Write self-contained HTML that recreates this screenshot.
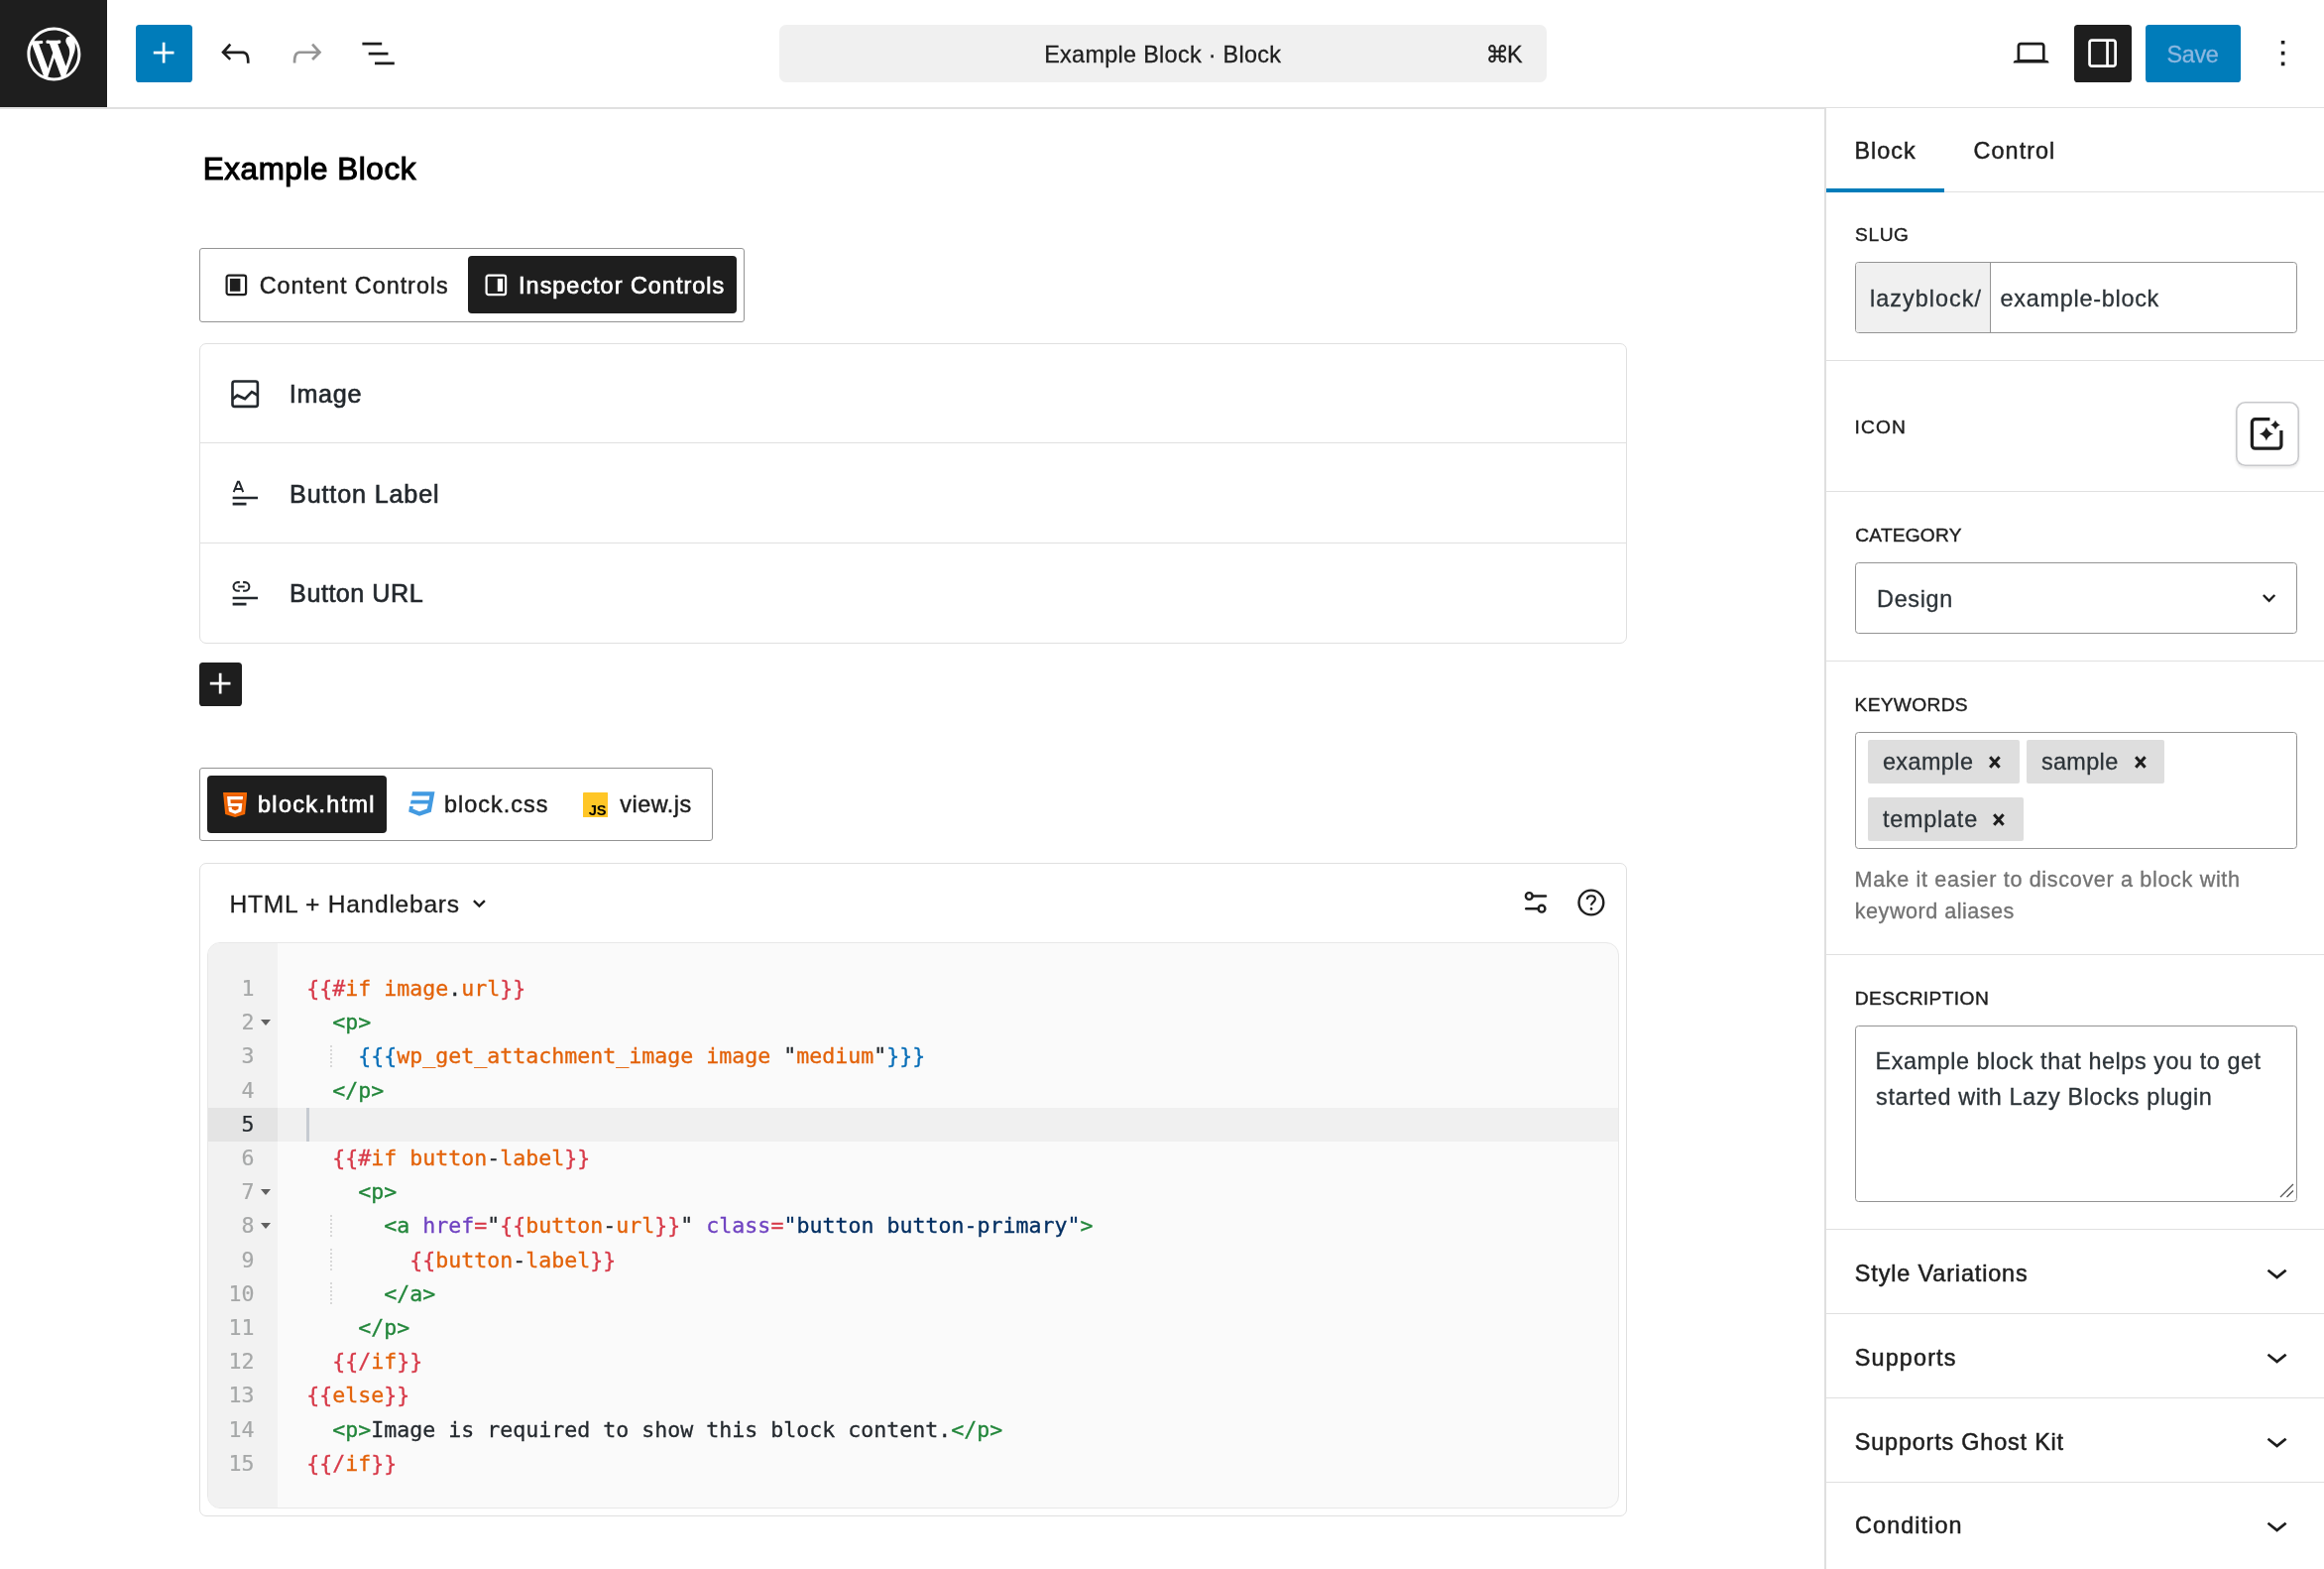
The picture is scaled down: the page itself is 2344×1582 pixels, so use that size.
<!DOCTYPE html>
<html lang="en">
<head>
<meta charset="utf-8">
<title>Example Block · Block</title>
<style>
*{box-sizing:border-box;margin:0;padding:0}
html,body{width:2344px;height:1582px;overflow:hidden;background:#fff}
body{position:relative;will-change:transform;font-family:"Liberation Sans",sans-serif;color:#1e1e1e}
.a{position:absolute}
.t{position:absolute;white-space:pre;line-height:1}
svg{position:absolute;display:block}
.ic{width:43.2px;height:43.2px;fill:#1e1e1e}
.hl{position:absolute;left:1842px;right:0;height:1px;background:#e0e0e0}
.ln{position:absolute;left:210px;width:46.4px;text-align:right;font:21.6px/34.2px "DejaVu Sans Mono","Liberation Mono",monospace;color:#a6a8a8;-webkit-text-stroke:.2px}
.ln.act{color:#24292e}
.cl{position:absolute;left:309.2px;white-space:pre;font:21.6px/34.2px "DejaVu Sans Mono","Liberation Mono",monospace;color:#24292e;-webkit-text-stroke:.3px}
.fold{position:absolute;left:263.4px;width:0;height:0;border-left:5.1px solid transparent;border-right:5.1px solid transparent;border-top:6.2px solid #606060}
.guide{position:absolute;left:333px;width:2px;height:23px;margin-top:5px;background:repeating-linear-gradient(to bottom,#d8d8d8 0 2px,transparent 2px 4px)}
.tok{position:absolute;height:43.4px;background:#dedede;border-radius:2px}
.x{position:absolute;width:11.8px;height:12.900px;overflow:visible}
</style>
</head>
<body>
<!-- ================= HEADER ================= -->
<div class="a" style="left:0;top:0;width:2344px;height:108px;background:#fff"></div>
<div class="a" style="left:0;top:108px;width:1842px;height:2px;background:#e0e0e0"></div>
<div class="a" style="left:1842px;top:108px;width:502px;height:1px;background:#e0e0e0"></div>
<div class="a" style="left:0;top:0;width:108px;height:108px;background:#1e1e1e"></div>
<svg style="left:21.6px;top:21.6px;width:64.8px;height:64.8px;fill:#fff" viewBox="-2 -2 24 24"><path d="M20 10c0-5.51-4.49-10-10-10C4.48 0 0 4.49 0 10c0 5.52 4.48 10 10 10 5.51 0 10-4.48 10-10zM7.780 15.370L4.370 6.220c.55-.02 1.170-.08 1.170-.08.5-.06.44-1.130-.06-1.110 0 0-1.450.11-2.370.11-.18 0-.37 0-.58-.01C4.120 2.690 6.870 1.110 10 1.110c2.330 0 4.450.87 6.050 2.340-.68-.11-1.650.39-1.650 1.580 0 .74.45 1.360.9 2.100.35.61.55 1.360.55 2.460 0 1.490-1.400 5-1.400 5l-3.030-8.370c.54-.02.82-.17.82-.17.5-.05.44-1.250-.06-1.220 0 0-1.440.12-2.380.12-.87 0-2.330-.12-2.330-.12-.5-.03-.56 1.200-.06 1.220l.92.08 1.260 3.410zM17.410 10c.24-.64.74-1.870.43-4.250.7 1.290 1.050 2.710 1.050 4.250 0 3.290-1.730 6.240-4.400 7.780.97-2.590 1.940-5.200 2.920-7.780zM6.100 18.090C3.120 16.650 1.110 13.530 1.110 10c0-1.300.23-2.480.72-3.590C3.250 10.300 4.670 14.200 6.100 18.090zm4.030-6.630l2.580 6.980c-.86.29-1.760.45-2.710.45-.79 0-1.570-.11-2.290-.33.81-2.380 1.620-4.740 2.420-7.100z"/></svg>
<div class="a" style="left:137px;top:25px;width:57px;height:58px;background:#007cba;border-radius:3.6px"></div>
<svg class="ic" style="left:144.2px;top:32.2px;fill:#fff" viewBox="0 0 24 24"><path d="M11 12.500V17.500H12.500V12.500H17.500V11H12.500V6H11V11H6V12.500H11Z"/></svg>
<svg class="ic" style="left:216.3px;top:32.4px" viewBox="0 0 24 24"><path d="M18.300 11.700c-.6-.6-1.400-.9-2.300-.9H6.700l2.900-3.300-1.100-1-4.500 5L8.500 16l1-1-2.700-2.700H16c.5 0 .9.2 1.300.5 1 1 1 3.400 1 4.500v.3h1.500v-.2c0-1.500 0-4.300-1.500-5.700z"/></svg>
<svg class="ic" style="left:288px;top:32.4px;fill:#959595" viewBox="0 0 24 24"><path d="M15.600 6.500l-1.100 1 2.900 3.300H8c-.9 0-1.700.3-2.300.9-1.400 1.500-1.400 4.200-1.400 5.600v.2h1.500v-.3c0-1.100 0-3.500 1-4.500.3-.3.7-.5 1.300-.5h9.200L14.500 15l1.100 1.100 4.600-4.600-4.600-5z"/></svg>
<svg class="ic" style="left:359.800px;top:32.4px" viewBox="0 0 24 24"><path d="M3 6h11v1.500H3V6Zm3.500 5.500h11V13h-11v-1.500ZM21 17H10v1.500h11V17Z"/></svg>
<div class="a" style="left:786px;top:25px;width:774px;height:58px;background:#f0f0f0;border-radius:7px"></div>
<svg class="ic" style="left:2027.4px;top:32.4px" viewBox="0 0 24 24"><path d="M20.500 16h-.7V8c0-1.100-.9-2-2-2H6.200c-1.100 0-2 .9-2 2v8h-.7c-.8 0-1.500.7-1.500 1.500h20c0-.8-.7-1.500-1.500-1.500zM5.700 8c0-.3.200-.5.500-.5h11.600c.3 0 .5.200.5.500v7.600H5.700V8z"/></svg>
<div class="a" style="left:2092px;top:25px;width:58px;height:58px;background:#1e1e1e;border-radius:3.6px"></div>
<svg class="ic" style="left:2099.2px;top:32.2px;fill:#fff" viewBox="0 0 24 24"><path fill-rule="evenodd" clip-rule="evenodd" d="M18 4H6c-1.100 0-2 .9-2 2v12c0 1.100.9 2 2 2h12c1.100 0 2-.9 2-2V6c0-1.100-.9-2-2-2zm-4 14.500H6c-.3 0-.5-.2-.5-.5V6c0-.3.2-.5.5-.5h8v13zm4.500-.5c0 .3-.2.5-.5.5h-2.500v-13H18c.3 0 .5.2.5.5v12z"/></svg>
<div class="a" style="left:2164px;top:25px;width:96px;height:58px;background:#007cba;border-radius:3.6px"></div>
<svg class="ic" style="left:2280.800px;top:32.4px" viewBox="0 0 24 24"><path d="M13 19h-2v-2h2v2zm0-6h-2v-2h2v2zm0-6h-2V5h2v2z"/></svg>

<!-- ================= MAIN ================= -->
<div class="a" style="left:201px;top:250px;width:550px;height:75px;border:1px solid #949494;border-radius:3px"></div>
<div class="a" style="left:472px;top:258px;width:271px;height:58px;background:#1e1e1e;border-radius:4px"></div>
<svg style="left:226px;top:274.8px;width:25px;height:25px" viewBox="0 0 25 25"><rect x="2.600" y="2.600" width="19.5" height="19.5" rx="2.200" fill="none" stroke="#1e1e1e" stroke-width="2.200"/><rect x="5.900" y="5.900" width="10.5" height="12.900" fill="#1e1e1e"/></svg>
<svg style="left:487.900px;top:274.8px;width:25px;height:25px" viewBox="0 0 25 25"><rect x="2.600" y="2.600" width="19.5" height="19.5" rx="2.200" fill="none" stroke="#fff" stroke-width="2.200"/><rect x="13.800" y="5.900" width="5.300" height="12.900" fill="#fff"/></svg>

<div class="a" style="left:201px;top:346px;width:1440px;height:303px;border:1px solid #e0e0e0;border-radius:7px"></div>
<div class="a" style="left:202px;top:446px;width:1438px;height:1px;background:#e0e0e0"></div>
<div class="a" style="left:202px;top:547px;width:1438px;height:1px;background:#e0e0e0"></div>
<!-- image control icon -->
<svg class="ic" style="left:225.600px;top:375.600px" viewBox="0 0 24 24" fill="none"><rect x="4.720" y="4.720" width="14.1" height="14.1" rx="1.200" fill="none" stroke="#23282d" stroke-width="1.450"/><path d="M4.800 14.700L7.400 12.600 11.700 14.500 15.500 10.600 19.100 12.700" fill="none" stroke="#23282d" stroke-width="1.500"/></svg>
<!-- text control icon -->
<svg class="ic" style="left:225.600px;top:475.150px" viewBox="0 0 24 24"><path d="M4.800 14.250h14.100v1.500H4.800zM4.800 17.700h7.700v1.500H4.800z" fill="#23282d"/><path d="M5.400 11.800L7.700 6h.7l2.300 5.800M6.200 10h3.700" fill="none" stroke="#23282d" stroke-width="1.100"/></svg>
<!-- url control icon -->
<svg class="ic" style="left:225.600px;top:576.150px" viewBox="0 0 24 24"><path d="M4.800 14.250h14.100v1.500H4.800zM4.800 17.700h7.700v1.500H4.800z" fill="#23282d"/><path d="M8.800 11H7.700a2.400 2.400 0 0 1 0-4.800h1.100M10.600 6.200h1.100a2.400 2.400 0 0 1 0 4.800h-1.100M7.900 8.600h3.600" fill="none" stroke="#23282d" stroke-width="1.150"/></svg>
<div class="a" style="left:201px;top:668px;width:43px;height:44px;background:#1e1e1e;border-radius:3.6px"></div>
<svg class="ic" style="left:201px;top:668px;fill:#fff" viewBox="0 0 24 24"><path d="M11 12.500V17.500H12.500V12.500H17.500V11H12.500V6H11V11H6V12.500H11Z"/></svg>

<div class="a" style="left:201px;top:774px;width:518px;height:74px;border:1px solid #949494;border-radius:3px"></div>
<div class="a" style="left:209px;top:782px;width:181px;height:58px;background:#1e1e1e;border-radius:4px"></div>
<!-- html5 icon -->
<svg style="left:224.800px;top:799.100px;width:24.300px;height:25px" viewBox="0 0 24.300 25"><path d="M0 0h24.300l-2.200 21.900-9.950 3.100-9.950-3.100z" fill="#f56a05"/><path d="M2.600 2.400h19.100l-1.700 17.800-7.850 2.400-7.850-2.400z" fill="#e65c00"/><path d="M4.100 4h15.950l-.3 3.300H7.400l.3 3.700h11.600l-.9 8.200-6.250 2.500-6.250-2.500-.5-4.500h3.300l.25 2.300 3.200 1.300 3.200-1.300.35-2.900H4.900z" fill="#fff"/></svg>
<!-- css3 icon -->
<svg style="left:411.900px;top:798.100px;width:26.800px;height:25px" viewBox="0 0 26.800 25"><path d="M4 .15H26.500L22.800 20.700 11 24.800.2 20.500 1 15.100H4.800L4.400 17.500 11 20.200 18.600 17.600 19.900 12.600H1.900L2.600 8.650H20.700L21.300 4.500H3.200Z" fill="#429ae1"/></svg>
<!-- js icon -->
<svg style="left:587.800px;top:798.700px;width:25.200px;height:25.200px" viewBox="0 0 25.200 25.200"><rect width="25.200" height="25.200" rx="1" fill="#ffc627"/><text x="5.700" y="23" font-family="Liberation Sans, sans-serif" font-weight="700" font-size="14.700" fill="#000">JS</text></svg>

<div class="a" style="left:201px;top:870px;width:1440px;height:659px;border:1px solid #e0e0e0;border-radius:7px"></div>
<svg style="left:475px;top:904px;width:18px;height:14px" viewBox="0 0 18 14"><path d="M2.900 4.100L8.400 9.600 13.900 4.100" fill="none" stroke="#1e1e1e" stroke-width="2.400"/></svg>
<!-- settings + help icons -->
<svg style="left:1535px;top:896px;width:28px;height:28px" viewBox="0 0 28 28" fill="none" stroke="#1e1e1e" stroke-width="2.400" stroke-linecap="round"><circle cx="7.300" cy="7.500" r="3.400"/><path d="M10.800 7.500H24"/><circle cx="20" cy="20.200" r="3.400"/><path d="M4.200 20.200H16.500"/></svg>
<svg style="left:1590px;top:895px;width:30px;height:30px" viewBox="0 0 30 30" fill="none" stroke="#1e1e1e" stroke-width="2.400"><circle cx="14.900" cy="15" r="12.400"/><path d="M10.700 11.800c.2-2.300 2-3.600 4.200-3.600 2.300 0 4 1.400 4 3.400 0 2.900-3.800 3.200-3.900 6.200" stroke-width="2.100"/><circle cx="15" cy="21.400" r="1.300" fill="#1e1e1e" stroke="none"/></svg>
<!-- code area -->
<div class="a" style="left:209px;top:950px;width:1424px;height:571px;background:#fafafa;border:1px solid #e8e8e8;border-radius:13px;overflow:hidden">
  <div class="a" style="left:-1px;top:-1px;width:71px;height:571px;background:#f2f2f2"></div>
  <div class="a" style="left:-1px;top:166px;width:71px;height:34px;background:#e4e4e4"></div>
  <div class="a" style="left:70px;top:166px;width:1360px;height:34px;background:#f0f0f0"></div>
</div>
<div class="a" style="left:309px;top:1117px;width:3px;height:34px;background:#c6cbd1"></div>
<div class="ln" style="top:980px">1</div>
<div class="cl" style="top:980px"><span style="color:#d73a49">{{#</span><span style="color:#e36209">if image</span><span style="color:#24292e">.</span><span style="color:#e36209">url</span><span style="color:#d73a49">}}</span></div>
<div class="ln" style="top:1014px">2</div>
<div class="cl" style="top:1014px">  <span style="color:#22863a">&lt;p&gt;</span></div>
<div class="fold" style="top:1028.0px"></div>
<div class="ln" style="top:1048px">3</div>
<div class="cl" style="top:1048px">    <span style="color:#0a6fb8">{{{</span><span style="color:#e36209">wp_get_attachment_image image </span><span style="color:#24292e">&quot;</span><span style="color:#e36209">medium</span><span style="color:#24292e">&quot;</span><span style="color:#0a6fb8">}}}</span></div>
<div class="guide" style="top:1048.6px"></div>
<div class="ln" style="top:1083px">4</div>
<div class="cl" style="top:1083px">  <span style="color:#22863a">&lt;/p&gt;</span></div>
<div class="ln act" style="top:1117px">5</div>
<div class="cl" style="top:1117px"></div>
<div class="ln" style="top:1151px">6</div>
<div class="cl" style="top:1151px">  <span style="color:#d73a49">{{#</span><span style="color:#e36209">if button</span><span style="color:#24292e">-</span><span style="color:#e36209">label</span><span style="color:#d73a49">}}</span></div>
<div class="ln" style="top:1185px">7</div>
<div class="cl" style="top:1185px">    <span style="color:#22863a">&lt;p&gt;</span></div>
<div class="fold" style="top:1199.0px"></div>
<div class="ln" style="top:1219px">8</div>
<div class="cl" style="top:1219px">      <span style="color:#22863a">&lt;a </span><span style="color:#6f42c1">href</span><span style="color:#d73a49">=</span><span style="color:#24292e">&quot;</span><span style="color:#d73a49">{{</span><span style="color:#e36209">button</span><span style="color:#24292e">-</span><span style="color:#e36209">url</span><span style="color:#d73a49">}}</span><span style="color:#24292e">&quot; </span><span style="color:#6f42c1">class</span><span style="color:#d73a49">=</span><span style="color:#032f62">&quot;button button-primary&quot;</span><span style="color:#22863a">&gt;</span></div>
<div class="fold" style="top:1233.2px"></div>
<div class="guide" style="top:1219.6px"></div>
<div class="ln" style="top:1254px">9</div>
<div class="cl" style="top:1254px">        <span style="color:#d73a49">{{</span><span style="color:#e36209">button</span><span style="color:#24292e">-</span><span style="color:#e36209">label</span><span style="color:#d73a49">}}</span></div>
<div class="guide" style="top:1253.8px"></div>
<div class="ln" style="top:1288px">10</div>
<div class="cl" style="top:1288px">      <span style="color:#22863a">&lt;/a&gt;</span></div>
<div class="guide" style="top:1288.0px"></div>
<div class="ln" style="top:1322px">11</div>
<div class="cl" style="top:1322px">    <span style="color:#22863a">&lt;/p&gt;</span></div>
<div class="ln" style="top:1356px">12</div>
<div class="cl" style="top:1356px">  <span style="color:#d73a49">{{/</span><span style="color:#e36209">if</span><span style="color:#d73a49">}}</span></div>
<div class="ln" style="top:1390px">13</div>
<div class="cl" style="top:1390px"><span style="color:#d73a49">{{</span><span style="color:#e36209">else</span><span style="color:#d73a49">}}</span></div>
<div class="ln" style="top:1425px">14</div>
<div class="cl" style="top:1425px">  <span style="color:#22863a">&lt;p&gt;</span><span style="color:#24292e">Image is required to show this block content.</span><span style="color:#22863a">&lt;/p&gt;</span></div>
<div class="ln" style="top:1459px">15</div>
<div class="cl" style="top:1459px"><span style="color:#d73a49">{{/</span><span style="color:#e36209">if</span><span style="color:#d73a49">}}</span></div>

<!-- ================= SIDEBAR ================= -->
<div class="a" style="left:1840px;top:108px;width:2px;height:1474px;background:#dfdfdf"></div>
<div class="hl" style="top:193px"></div>
<div class="a" style="left:1842px;top:190px;width:119px;height:4px;background:#007cba"></div>
<div class="hl" style="top:363px"></div>
<div class="hl" style="top:495px"></div>
<div class="hl" style="top:666px"></div>
<div class="hl" style="top:962px"></div>
<div class="hl" style="top:1239px"></div>
<div class="hl" style="top:1324px"></div>
<div class="hl" style="top:1409px"></div>
<div class="hl" style="top:1494px"></div>
<!-- slug -->
<div class="a" style="left:1871px;top:264px;width:446px;height:72px;border:1px solid #949494;border-radius:3.6px;overflow:hidden"><div class="a" style="left:0;top:0;width:136px;height:70px;background:#f0f0f0;border-right:1px solid #949494"></div></div>
<!-- icon button -->
<div class="a" style="left:2254.500px;top:405px;width:64px;height:64.5px;border-radius:9.5px;background:#fff;box-shadow:inset 0 0 0 1.600px #c8c9cc,0 1.5px 3px rgba(0,0,0,.09)"></div>
<svg style="left:2254.400px;top:405px;width:65px;height:65px" viewBox="0 0 65 65"><path d="M35.400 17.600H20.600a3.200 3.200 0 0 0-3.200 3.200V44a3.200 3.200 0 0 0 3.200 3.200H43.700a3.200 3.200 0 0 0 3.200-3.200V28.900" fill="none" stroke="#1e1e1e" stroke-width="3.250"/><path d="M31.900 25.400Q33.500 30.800 38.900 32.400Q33.500 34 31.900 39.400Q30.300 34 24.900 32.400Q30.300 30.800 31.900 25.400ZM41 18.500Q42.100 22.300 45.900 23.400Q42.100 24.500 41 28.300Q39.900 24.500 36.100 23.400Q39.900 22.300 41 18.500Z" fill="#1e1e1e"/></svg>
<!-- select -->
<div class="a" style="left:1871px;top:567px;width:446px;height:72px;border:1px solid #949494;border-radius:3.600px"></div>
<svg style="left:2280px;top:596px;width:18px;height:14px" viewBox="0 0 18 14"><path d="M2.900 4L8.600 9.800 14.300 4" fill="none" stroke="#1e1e1e" stroke-width="2.400"/></svg>
<!-- tokens -->
<div class="a" style="left:1871px;top:738px;width:446px;height:118px;border:1px solid #949494;border-radius:3.600px"></div>
<div class="tok" style="left:1884.100px;top:746.200px;width:152.800px"></div>
<div class="tok" style="left:2044.100px;top:746.200px;width:138.700px"></div>
<div class="tok" style="left:1884.100px;top:804.300px;width:156.700px"></div>
<svg class="x" style="left:2005.8px;top:762.1px" viewBox="0 0 11.8 12.900"><path d="M1.200 1.200L10.600 11.700M10.600 1.200L1.200 11.700" stroke="#1e1e1e" stroke-width="3.100" fill="none"/></svg>
<svg class="x" style="left:2152.7px;top:762.1px" viewBox="0 0 11.8 12.900"><path d="M1.200 1.200L10.600 11.700M10.600 1.200L1.200 11.700" stroke="#1e1e1e" stroke-width="3.100" fill="none"/></svg>
<svg class="x" style="left:2010.4px;top:820.1px" viewBox="0 0 11.8 12.900"><path d="M1.200 1.200L10.600 11.700M10.600 1.200L1.200 11.700" stroke="#1e1e1e" stroke-width="3.100" fill="none"/></svg>
<!-- textarea -->
<div class="a" style="left:1871px;top:1034px;width:446px;height:178px;border:1px solid #949494;border-radius:3.600px"></div>
<svg style="left:2298px;top:1192px;width:16px;height:16px" viewBox="0 0 16 16"><path d="M2 15L15 2M8.500 15L15 8.500" stroke="#555" stroke-width="1.300" fill="none"/></svg>
<!-- panel chevrons -->
<svg class="ic" style="left:2274.6px;top:1260.6px" viewBox="0 0 24 24"><path d="M17.500 11.600L12 16l-5.500-4.400.9-1.200L12 14l4.500-3.600 1 1.200z"/></svg>
<svg class="ic" style="left:2274.6px;top:1345.6px" viewBox="0 0 24 24"><path d="M17.500 11.600L12 16l-5.500-4.400.9-1.200L12 14l4.500-3.600 1 1.200z"/></svg>
<svg class="ic" style="left:2274.6px;top:1430.6px" viewBox="0 0 24 24"><path d="M17.500 11.600L12 16l-5.500-4.400.9-1.200L12 14l4.500-3.600 1 1.200z"/></svg>
<svg class="ic" style="left:2274.6px;top:1515.6px" viewBox="0 0 24 24"><path d="M17.500 11.600L12 16l-5.500-4.400.9-1.200L12 14l4.500-3.600 1 1.200z"/></svg>

<div class="t" style="left:1053.2px;top:42px;line-height:26px;font-size:23.4px;letter-spacing:0.309px;color:#1e1e1e;-webkit-text-stroke:0.3px #1e1e1e;">Example Block · Block</div>
<div class="t" style="left:1498.4px;top:41px;line-height:28px;font-size:23.4px;letter-spacing:-1.892px;color:#1e1e1e;font-family:'Liberation Sans','DejaVu Sans',sans-serif;-webkit-text-stroke:0.3px #1e1e1e;">⌘K</div>
<div class="t" style="left:2185.4px;top:42px;line-height:26px;font-size:23.4px;letter-spacing:-0.275px;color:#8bb7e0;-webkit-text-stroke:0.3px #8bb7e0;">Save</div>
<div class="t" style="left:204.8px;top:153px;line-height:35px;font-size:31.4px;letter-spacing:0.581px;color:#000;-webkit-text-stroke:1.1px #000;">Example Block</div>
<div class="t" style="left:261.7px;top:275px;line-height:26px;font-size:23.4px;letter-spacing:0.967px;color:#1e1e1e;-webkit-text-stroke:0.45px #1e1e1e;">Content Controls</div>
<div class="t" style="left:523.1px;top:275px;line-height:26px;font-size:23.4px;letter-spacing:1.014px;color:#fff;-webkit-text-stroke:0.7px #fff;">Inspector Controls</div>
<div class="t" style="left:291.7px;top:383px;line-height:28px;font-size:25.2px;letter-spacing:0.690px;color:#23282d;-webkit-text-stroke:0.6px #23282d;">Image</div>
<div class="t" style="left:292.1px;top:484px;line-height:28px;font-size:25.2px;letter-spacing:0.823px;color:#23282d;-webkit-text-stroke:0.6px #23282d;">Button Label</div>
<div class="t" style="left:292.1px;top:584px;line-height:28px;font-size:25.2px;letter-spacing:0.493px;color:#23282d;-webkit-text-stroke:0.6px #23282d;">Button URL</div>
<div class="t" style="left:260.0px;top:798px;line-height:26px;font-size:23.4px;letter-spacing:1.364px;color:#fff;-webkit-text-stroke:0.7px #fff;">block.html</div>
<div class="t" style="left:447.9px;top:798px;line-height:26px;font-size:23.4px;letter-spacing:1.041px;color:#1e1e1e;-webkit-text-stroke:0.45px #1e1e1e;">block.css</div>
<div class="t" style="left:625.2px;top:798px;line-height:26px;font-size:23.4px;letter-spacing:0.527px;color:#1e1e1e;-webkit-text-stroke:0.45px #1e1e1e;">view.js</div>
<div class="t" style="left:231.6px;top:898px;line-height:27px;font-size:24.6px;letter-spacing:0.723px;color:#1e1e1e;-webkit-text-stroke:0.3px #1e1e1e;">HTML + Handlebars</div>
<div class="t" style="left:1870.5px;top:139px;line-height:26px;font-size:23.4px;letter-spacing:1.000px;color:#1e1e1e;-webkit-text-stroke:0.45px #1e1e1e;">Block</div>
<div class="t" style="left:1990.6px;top:139px;line-height:26px;font-size:23.4px;letter-spacing:1.050px;color:#1e1e1e;-webkit-text-stroke:0.45px #1e1e1e;">Control</div>
<div class="t" style="left:1871.0px;top:226px;line-height:21px;font-size:19.2px;letter-spacing:0.584px;color:#1e1e1e;-webkit-text-stroke:0.4px #1e1e1e;">SLUG</div>
<div class="t" style="left:1886.0px;top:288px;line-height:26px;font-size:23.4px;letter-spacing:1.028px;color:#2c3338;-webkit-text-stroke:0.3px #2c3338;">lazyblock/</div>
<div class="t" style="left:2017.5px;top:288px;line-height:26px;font-size:23.4px;letter-spacing:0.748px;color:#2c3338;-webkit-text-stroke:0.3px #2c3338;">example-block</div>
<div class="t" style="left:1870.5px;top:420px;line-height:21px;font-size:19.2px;letter-spacing:1.146px;color:#1e1e1e;-webkit-text-stroke:0.4px #1e1e1e;">ICON</div>
<div class="t" style="left:1871.3px;top:529px;line-height:21px;font-size:19.2px;letter-spacing:0.175px;color:#1e1e1e;-webkit-text-stroke:0.4px #1e1e1e;">CATEGORY</div>
<div class="t" style="left:1893.1px;top:591px;line-height:26px;font-size:23.4px;letter-spacing:0.662px;color:#2c3338;-webkit-text-stroke:0.3px #2c3338;">Design</div>
<div class="t" style="left:1870.6px;top:700px;line-height:21px;font-size:19.2px;letter-spacing:0.294px;color:#1e1e1e;-webkit-text-stroke:0.4px #1e1e1e;">KEYWORDS</div>
<div class="t" style="left:1898.9px;top:755px;line-height:26px;font-size:23.4px;letter-spacing:0.438px;color:#2c3338;-webkit-text-stroke:0.3px #2c3338;">example</div>
<div class="t" style="left:2058.9px;top:755px;line-height:26px;font-size:23.4px;letter-spacing:0.370px;color:#2c3338;-webkit-text-stroke:0.3px #2c3338;">sample</div>
<div class="t" style="left:1899.0px;top:813px;line-height:26px;font-size:23.4px;letter-spacing:0.775px;color:#2c3338;-webkit-text-stroke:0.3px #2c3338;">template</div>
<div class="t" style="left:1870.5px;top:874px;line-height:25px;font-size:21.6px;letter-spacing:0.655px;color:#727272;-webkit-text-stroke:0.3px #727272;">Make it easier to discover a block with</div>
<div class="t" style="left:1870.8px;top:906px;line-height:25px;font-size:21.6px;letter-spacing:0.493px;color:#727272;-webkit-text-stroke:0.3px #727272;">keyword aliases</div>
<div class="t" style="left:1870.8px;top:996px;line-height:21px;font-size:19.2px;letter-spacing:0.381px;color:#1e1e1e;-webkit-text-stroke:0.4px #1e1e1e;">DESCRIPTION</div>
<div class="t" style="left:1891.5px;top:1057px;line-height:26px;font-size:23.4px;letter-spacing:0.569px;color:#2c3338;-webkit-text-stroke:0.3px #2c3338;">Example block that helps you to get</div>
<div class="t" style="left:1892.1px;top:1093px;line-height:26px;font-size:23.4px;letter-spacing:0.631px;color:#2c3338;-webkit-text-stroke:0.3px #2c3338;">started with Lazy Blocks plugin</div>
<div class="t" style="left:1870.8px;top:1271px;line-height:26px;font-size:23.4px;letter-spacing:0.873px;color:#1e1e1e;-webkit-text-stroke:0.5px #1e1e1e;">Style Variations</div>
<div class="t" style="left:1870.8px;top:1356px;line-height:26px;font-size:23.4px;letter-spacing:1.141px;color:#1e1e1e;-webkit-text-stroke:0.5px #1e1e1e;">Supports</div>
<div class="t" style="left:1870.8px;top:1441px;line-height:26px;font-size:23.4px;letter-spacing:0.821px;color:#1e1e1e;-webkit-text-stroke:0.5px #1e1e1e;">Supports Ghost Kit</div>
<div class="t" style="left:1871.1px;top:1525px;line-height:26px;font-size:23.4px;letter-spacing:1.069px;color:#1e1e1e;-webkit-text-stroke:0.5px #1e1e1e;">Condition</div>
</body>
</html>
